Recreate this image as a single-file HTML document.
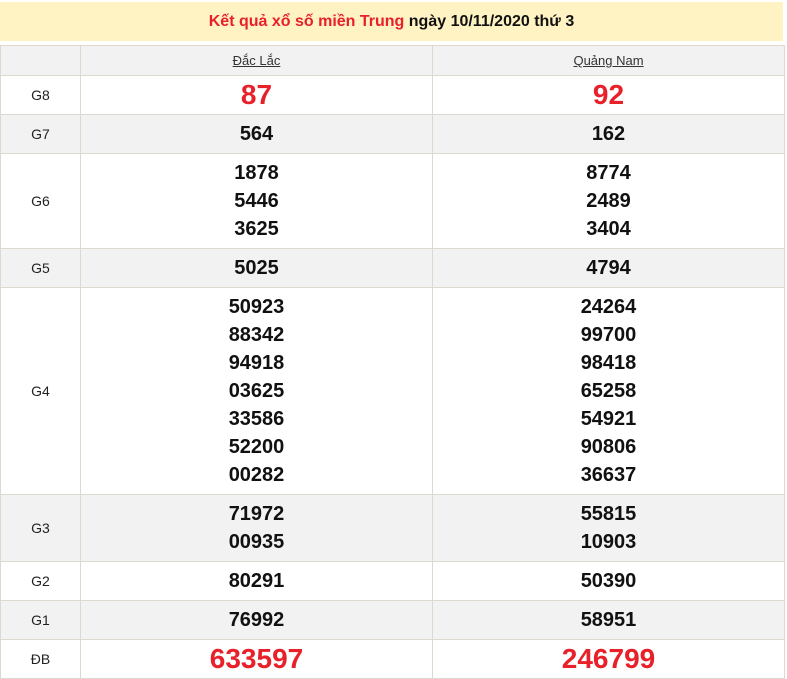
<!DOCTYPE html>
<html><head><meta charset="utf-8"><style>
body{margin:0;background:#fff;font-family:"Liberation Sans",Arial,sans-serif;}
.hd{position:absolute;left:0;top:2px;width:783px;height:39px;background:#fff3c4;text-align:center;line-height:39px;font-size:16px;font-weight:bold;color:#111;}
.hd span{color:#e8202a}
table{position:absolute;left:0;top:45px;width:784px;border-collapse:collapse;table-layout:fixed;}
td{border:1px solid #ddd8d0;text-align:center;padding:0;font-weight:bold;font-size:20px;color:#111;line-height:28px;}
td.l{width:79px;font-weight:normal;font-size:14px;color:#222;}
tr.g td{background:#f2f2f2}
.th td{font-size:13px;font-weight:normal;color:#333;height:29px;line-height:29px}
.th u{text-decoration:underline}
.r{color:#e8202a;font-size:28px}
</style></head><body>
<div class="hd"><span>Kết quả xổ số miền Trung</span> ngày 10/11/2020 thứ 3</div>
<table>
<colgroup><col style="width:80px"><col style="width:352px"><col style="width:352px"></colgroup>
<tr class="g th"><td class="l"></td><td><u>Đắc Lắc</u></td><td><u>Quảng Nam</u></td></tr>
<tr style="height:39px"><td class="l">G8</td><td class="r">87</td><td class="r">92</td></tr>
<tr class="g" style="height:39px"><td class="l">G7</td><td>564</td><td>162</td></tr>
<tr style="height:95px"><td class="l">G6</td><td>1878<br>5446<br>3625</td><td>8774<br>2489<br>3404</td></tr>
<tr class="g" style="height:39px"><td class="l">G5</td><td>5025</td><td>4794</td></tr>
<tr style="height:207px"><td class="l">G4</td><td>50923<br>88342<br>94918<br>03625<br>33586<br>52200<br>00282</td><td>24264<br>99700<br>98418<br>65258<br>54921<br>90806<br>36637</td></tr>
<tr class="g" style="height:67px"><td class="l">G3</td><td>71972<br>00935</td><td>55815<br>10903</td></tr>
<tr style="height:39px"><td class="l">G2</td><td>80291</td><td>50390</td></tr>
<tr class="g" style="height:39px"><td class="l">G1</td><td>76992</td><td>58951</td></tr>
<tr style="height:39px"><td class="l">ĐB</td><td class="r">633597</td><td class="r">246799</td></tr>
</table>
</body></html>
